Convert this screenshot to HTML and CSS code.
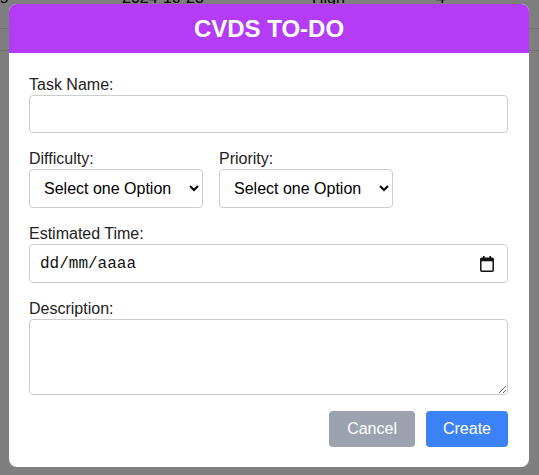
FILE: index.html
```html
<!DOCTYPE html>
<html lang="es">
<head>
<meta charset="utf-8">
<title>CVDS TO-DO</title>
<link rel="stylesheet" href="styles.css">
</head>
<body>
<div class="bg-table">
  <div class="bg-row first"><span>s</span><span>2024-10-23</span><span>High</span><span>4</span></div>
  <div class="bg-row second"><span></span><span></span><span></span><span></span></div>
</div>

<div class="overlay">
  <div class="modal">
    <div class="modal-header"><h2>CVDS TO-DO</h2></div>
    <form class="modal-body">
      <div class="field">
        <label for="task">Task Name:</label>
        <input id="task" class="text-input" type="text">
      </div>
      <div class="row">
        <div class="field">
          <label for="difficulty">Difficulty:</label>
          <select id="difficulty" class="select"><option>Select one Option</option><option>Low</option><option>Medium</option><option>High</option></select>
        </div>
        <div class="field">
          <label for="priority">Priority:</label>
          <select id="priority" class="select"><option>Select one Option</option><option>1</option><option>2</option><option>3</option><option>4</option><option>5</option></select>
        </div>
      </div>
      <div class="field">
        <label for="time">Estimated Time:</label>
        <div class="date-field">
          <input id="time" class="date-input" type="text" placeholder="dd/mm/aaaa">
          <svg class="cal-icon" width="14" height="16" viewBox="0 0 14 16" aria-hidden="true">
            <rect x="3" y="0" width="1.6" height="3" fill="#111"/>
            <rect x="9.4" y="0" width="1.6" height="3" fill="#111"/>
            <rect x="0.8" y="2.3" width="12.4" height="12.9" rx="1" fill="none" stroke="#111" stroke-width="1.5"/>
            <rect x="0.8" y="2.3" width="12.4" height="3" fill="#111"/>
          </svg>
        </div>
      </div>
      <div class="field">
        <label for="desc">Description:</label>
        <textarea id="desc" class="textarea"></textarea>
      </div>
      <div class="actions">
        <button type="button" class="btn cancel">Cancel</button>
        <button type="button" class="btn create">Create</button>
      </div>
    </form>
  </div>
</div>
</body>
</html>
```
FILE: styles.css
```css
body {
  margin: 0;
  background: #fff;
  font-family: "Liberation Sans", Arial, sans-serif;
  color: #000;
}

.bg-table {
  margin-top: -15px;
}

.bg-row {
  display: grid;
  grid-template-columns: 122px 190px 124px 1fr;
  font-size: 16px;
  line-height: 18px;
  border-bottom: 1px solid #e4e4e4;
  box-sizing: border-box;
}

.bg-row.first {
  height: 44px;
  padding-top: 4px;
}

.bg-row.second {
  height: 22px;
}

.overlay {
  position: fixed;
  inset: 0;
  background: rgba(0, 0, 0, 0.5);
  display: flex;
  justify-content: flex-start;
  align-items: flex-start;
  padding: 4px 0 0 9px;
}

.modal {
  width: 520px;
  background: #fff;
  border-radius: 8px;
  overflow: hidden;
}

.modal-header {
  background: #b43cf6;
  padding: 10px 0;
  text-align: center;
}

.modal-header h2 {
  margin: 0;
  font-size: 24px;
  line-height: 29px;
  font-weight: bold;
  color: #fff;
}

.modal-body {
  padding: 22px 21px 20px 20px;
  display: flex;
  flex-direction: column;
  gap: 16px;
}

.field label {
  display: block;
  font-size: 16px;
  line-height: 19px;
  margin-bottom: 1px;
  color: #222;
}

.text-input {
  display: block;
  width: 100%;
  box-sizing: border-box;
  height: 38px;
  padding: 0 10px;
  border: 1px solid #ccc;
  border-radius: 4px;
  font: 16px "Liberation Sans", Arial, sans-serif;
  outline: none;
}

.row {
  display: flex;
  gap: 16px;
}

.select {
  display: block;
  height: 39px;
  box-sizing: border-box;
  padding: 0 14px 0 10px;
  border: 1px solid #ccc;
  border-radius: 4px;
  font: 16px "Liberation Sans", Arial, sans-serif;
  background: #fff;
  color: #000;
}

.date-field {
  display: flex;
  align-items: center;
  height: 39px;
  box-sizing: border-box;
  padding: 0 13px 0 10px;
  border: 1px solid #ccc;
  border-radius: 4px;
}

.date-input {
  flex: 1;
  border: 0;
  outline: none;
  padding: 0;
  font: 16px "Liberation Mono", "DejaVu Sans Mono", monospace;
  color: #000;
  background: transparent;
}

.date-input::placeholder {
  color: #111;
  opacity: 1;
}

.cal-icon {
  display: block;
  flex: none;
}

.textarea {
  display: block;
  width: 100%;
  height: 76px;
  box-sizing: border-box;
  padding: 10px;
  border: 1px solid #ccc;
  border-radius: 4px;
  font: 16px "Liberation Sans", Arial, sans-serif;
  resize: vertical;
  outline: none;
}

.actions {
  display: flex;
  justify-content: flex-end;
  gap: 11px;
}

.btn {
  height: 36px;
  padding: 0 17px;
  border: 0;
  border-radius: 4px;
  color: #fff;
  font: 16px "Liberation Sans", Arial, sans-serif;
}

.cancel {
  background: #9ca3af;
  padding: 0 18px;
}

.create {
  background: #3b82f6;
}
```
